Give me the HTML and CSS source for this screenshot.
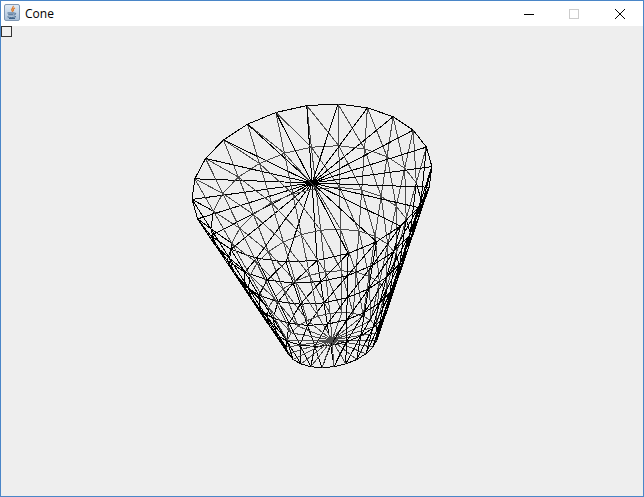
FILE: index.html
```html
<!DOCTYPE html>
<html lang="en">
<head>
<meta charset="utf-8">
<title>Cone</title>
<link rel="stylesheet" href="styles.css">
</head>
<body>
<div class="window">
  <header class="titlebar">
    <svg class="app-icon" viewBox="0 0 16 17" aria-hidden="true">
      <defs>
        <linearGradient id="frameFill" x1="0" y1="0" x2="0" y2="1">
          <stop offset="0" stop-color="#e4edf6"/>
          <stop offset="1" stop-color="#a9c0d8"/>
        </linearGradient>
      </defs>
      <rect x="0.5" y="0.5" width="15" height="16" rx="1.5" fill="url(#frameFill)" class="icon-frame"/>
      <path d="M9 2c1.300 1.500-2.600 2.700-1 4.700.4.500.6.800.5 1.200" class="icon-steam"/>
      <path d="M11 4c-2 .9-2.400 1.800-1.300 3" class="icon-steam"/>
      <path d="M3.500 9h6.500M4.200 10.800h5.200M3.500 12.800c2 .9 6 .9 8.500-.2M10.200 9.100c2-.4 2.200 1.500-.5 2M5 14.500h6" class="icon-cup"/>
    </svg>
    <span class="title">Cone</span>
    <div class="controls">
      <span class="control"><svg viewBox="0 0 10 10" class="glyph"><path d="M1 5.500h10" class="min"/></svg></span>
      <span class="control"><svg viewBox="0 0 10 10" class="glyph"><rect x="0.500" y="0.500" width="9" height="9" class="max"/></svg></span>
      <span class="control"><svg viewBox="0 0 10 10" class="glyph"><path d="M0 0l10 10M10 0L0 10" class="close"/></svg></span>
    </div>
  </header>
  <main class="content">
    <input type="checkbox" class="check" aria-label="Toggle">
    <svg id="cone" class="canvas" viewBox="1 37 642 459" aria-label="Wireframe cone"></svg>
  </main>
</div>
<script src="cone.js"></script>
</body>
</html>
```

FILE: styles.css
```css
* { box-sizing: border-box; }
html, body { margin: 0; height: 100%; }
body { font-family: "Open Sans", "Noto Sans", sans-serif; background: #eeeeee; }
.window {
  width: 644px;
  height: 497px;
  border: 1px solid #4a86c8;
  display: flex;
  flex-direction: column;
  background: #eeeeee;
  overflow: hidden;
}
.titlebar {
  height: 25px;
  flex: none;
  background: #ffffff;
  display: flex;
  align-items: center;
  padding-left: 3px;
}
.app-icon { width: 16px; height: 17px; flex: none; margin-bottom: 2px; }
.icon-frame { stroke: #7f97b3; stroke-width: 1; }
.icon-steam { fill: none; stroke: #e0731c; stroke-width: 1.200; }
.icon-cup { fill: none; stroke: #3f6288; stroke-width: 1; }
.title { margin-left: 5px; font-size: 12px; color: #000000; line-height: 16px; }
.controls { margin-left: auto; display: flex; }
.control { width: 46px; height: 25px; display: flex; align-items: center; justify-content: center; }
.glyph { width: 10px; height: 10px; display: block; overflow: visible; }
.min { stroke: #000000; stroke-width: 1; fill: none; }
.max { stroke: #cccccc; stroke-width: 1; fill: none; }
.close { stroke: #000000; stroke-width: 1; fill: none; }
.content { flex: 1; display: flex; flex-direction: column; min-height: 0; }
.check {
  appearance: none;
  margin: 0;
  width: 11px;
  height: 11px;
  flex: none;
  border: 1px solid #333333;
  background: #f0f0f0;
}
.canvas { flex: 1; display: block; width: 642px; min-height: 0; }
.edge { stroke-width: 1; shape-rendering: crispEdges; fill: none; }
.front { stroke: #000000; }
.back { stroke: #4a4a4a; }
```

FILE: cone.js
```js
(function () {
  var svg = document.getElementById('cone');
  var NS = 'http://www.w3.org/2000/svg';
  var SEG = 24, RINGS = 5, OFF = -2.5 * Math.PI / 180;
  var top = { cx: 312, cy: 183, ax: 120, ay: 78, skew: 13 };
  var bot = { cx: 332, cy: 340, ax: 46, ay: 27, skew: 6 };

  function lerp(a, b, t) { return a + (b - a) * t; }

  function vertex(ring, i) {
    var t = ring / RINGS;
    var th = OFF + i * 2 * Math.PI / SEG;
    var s = Math.sin(th), c = Math.cos(th);
    var cx = lerp(top.cx, bot.cx, t), cy = lerp(top.cy, bot.cy, t);
    var ax = lerp(top.ax, bot.ax, t), ay = lerp(top.ay, bot.ay, t), sk = lerp(top.skew, bot.skew, t);
    return { x: cx + ax * s, y: cy - ay * c - sk * s, back: c > 0.05 };
  }

  function line(a, b, back) {
    var el = document.createElementNS(NS, 'line');
    el.setAttribute('x1', a.x.toFixed(1));
    el.setAttribute('y1', a.y.toFixed(1));
    el.setAttribute('x2', b.x.toFixed(1));
    el.setAttribute('y2', b.y.toFixed(1));
    el.setAttribute('class', 'edge ' + (back ? 'back' : 'front'));
    svg.appendChild(el);
  }

  for (var i = 0; i < SEG; i++) {
    var j = (i + 1) % SEG;
    for (var r = 0; r <= RINGS; r++) {
      var p = vertex(r, i), q = vertex(r, j);
      line(p, q, r > 0 && p.back && q.back);
      if (r < RINGS) {
        var d = vertex(r + 1, i), e = vertex(r + 1, j);
        line(p, d, p.back);
        line(p, e, p.back && e.back);
      }
    }
    line({ x: top.cx, y: top.cy }, vertex(0, i), false);
    line({ x: bot.cx, y: bot.cy }, vertex(RINGS, i), true);
  }
})();
```
